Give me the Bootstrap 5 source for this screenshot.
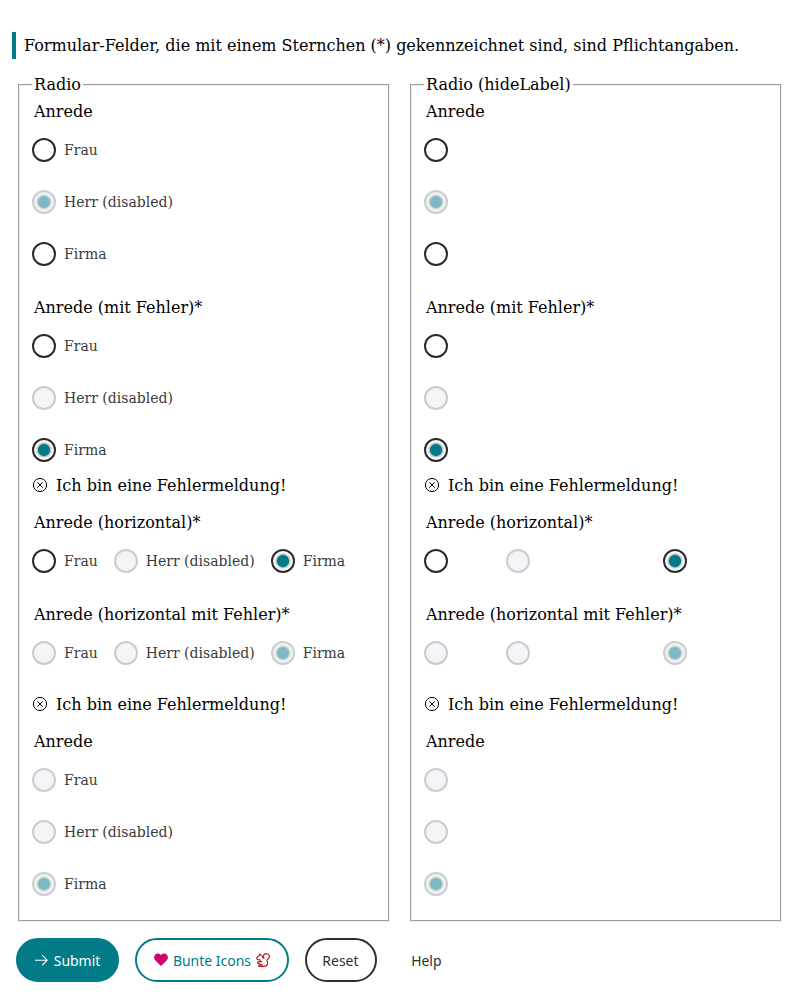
<!DOCTYPE html>
<html lang="de">
<head>
<meta charset="utf-8">
<meta name="viewport" content="width=device-width, initial-scale=1">
<title>Radio</title>
<link href="https://cdn.jsdelivr.net/npm/bootstrap@5.3.0/dist/css/bootstrap.min.css" rel="stylesheet">
<style>
body{font-family:"DejaVu Serif",serif;font-size:16px;color:#000;line-height:19px;background:#fff}
.hint{margin:32px 0 16px 12px;border-left:4px solid #007b87;padding-left:8px;height:27px;line-height:27px}
.page-grid{--bs-gutter-x:20px;margin-left:8px;margin-right:8px}
.frame{border:2px groove #f0f0f0;padding:4px 12px 9px;height:847px}
.frame>legend{float:none;width:auto;font-size:16px;line-height:19px;margin:0;padding:0 2px}
.group-label{float:none;font-size:16px;line-height:28px;height:26px;margin:0;padding:0 2px}
.group{margin-bottom:14px}
.group.with-error{margin-bottom:0}
.choice{height:52px;font-size:14px;color:#2f2f31;gap:8px}
.choice .form-check-input{width:24px;height:24px;margin:0;border:2px solid #2b2b2d;background:#fff;flex:none;opacity:1}
.choice .form-check-input:checked{background:radial-gradient(circle,#007b87 0 5.5px,#a9b4b6 6.4px,#dededf 7.2px,#fff 9px)}
.choice .form-check-input:disabled{border-color:#ccc;background:#f3f4f8;opacity:1}
.choice .form-check-input:disabled:checked{background:radial-gradient(circle,#7fbac2 0 5.5px,#c9d0d5 6.4px,#e4e5e9 7.2px,#f3f4f8 9px)}
.choice .form-check-label,.choice .form-check-input:disabled~.form-check-label{color:#3a3a3c;opacity:1}
.error{height:18px;gap:8px;margin-bottom:15px}
.error span{line-height:18px;padding-top:2px}
.error.low{margin-top:16px}
.error svg{width:16px;height:16px}
.actions{margin:16px 0 0 16px;gap:16px}
.pill{height:44px;border-radius:22px;border:2px solid;padding:0 8px 1px;font-family:"Noto Sans",sans-serif;font-size:15px;line-height:20px;display:inline-flex;align-items:center;justify-content:center;gap:4px;white-space:nowrap}
.pill span{transform:scaleX(.93)}
.pill svg{width:14px;height:14px;flex:none}
.pill-submit{width:103px;background:#007b87;border-color:#007b87;color:#fff;padding-left:9px}
.pill-icons{width:154px;color:#007b87;border-color:#007b87;gap:2px}
.pill-reset{width:72px;color:#2f2f31;padding-right:9px}
.pill-help{width:67px;color:#2f2f31;border-color:transparent}
</style>
</head>
<body>
<p class="hint">Formular-Felder, die mit einem Sternchen (*) gekennzeichnet sind, sind Pflichtangaben.</p>
<form>
<div class="row page-grid" id="columns"></div>
<div class="actions d-flex">
<button type="button" class="btn pill pill-submit"><svg viewBox="0 0 14 14" fill="none" stroke="#fff" stroke-width="1.1"><path d="M1 7.2H13M8.2 2.2L13.2 7.2L8.2 12.2"/></svg><span>Submit</span></button>
<button type="button" class="btn pill pill-icons"><svg viewBox="0 0 14 14" fill="#cf0070"><path d="M7 13L1.2 7.3C-.5 5.4-.1 2.9 1.4 1.5C3.2.1 5.7.3 7 2.3C8.3.3 10.8.1 12.6 1.5C14.1 2.9 14.5 5.4 12.8 7.3Z"/></svg><span>Bunte Icons</span><svg viewBox="0 0 14 14" fill="none" stroke="#c0181c" stroke-width="1.15" stroke-linejoin="round" stroke-linecap="round"><path d="M3.4 2.4L3.8 1L5 2.2C6.3 2.6 6.8 3.6 6.7 4.7L7.8 5.2C8.2 4.3 7.3 3.6 7.6 2.3C8 .9 9.6.4 11 .8C12.8 1.2 13.7 2.8 13.3 4.3C12.9 5.9 11.3 6 11 7.1C10.8 8.2 12 9 11.6 10.8C11.2 12.6 9.9 13.3 8.2 13.3H2.8C2.2 12.3 3 11.7 4.6 11.8L3.2 10.4L1.6 10.1L1.7 8.8L4.2 8.6L4 6.8L2.4 6.7C1.2 6.5.5 5.8.8 4.8C1.5 4.1 2 2.8 3.4 2.4ZM4.6 11.8H6.4M4.2 8.6H5.8"/></svg></button>
<button type="reset" class="btn pill pill-reset"><span>Reset</span></button>
<button type="button" class="btn pill pill-help"><span>Help</span></button>
</div>
</form>
<script>
const groups = [
  {label: 'Anrede', checked: 1, disabled: [1]},
  {label: 'Anrede (mit Fehler)*', checked: 2, disabled: [1], error: true},
  {label: 'Anrede (horizontal)*', checked: 2, disabled: [1], horizontal: true},
  {label: 'Anrede (horizontal mit Fehler)*', checked: 2, disabled: [0, 1, 2], horizontal: true, error: true},
  {label: 'Anrede', checked: 2, disabled: [0, 1, 2]}
];
const names = ['Frau', 'Herr (disabled)', 'Firma'];
const errorIcon = '<svg viewBox="0 0 16 16" fill="none" stroke="#000" stroke-width="1"><circle cx="8" cy="8" r="6.6"/><path d="M5.2 5.2L10.8 10.8M10.8 5.2L5.2 10.8"/></svg>';
function fieldset(title, hidden, key) {
  const body = groups.map((g, i) => {
    const items = names.map((n, j) => {
      const id = `${key}-${i}-${j}`;
      return `<div class="choice d-flex align-items-center"><input class="form-check-input" type="radio" id="${id}" name="${key}-${i}"${g.checked === j ? ' checked' : ''}${g.disabled.includes(j) ? ' disabled' : ''}><label class="form-check-label${hidden ? ' invisible' : ''}" for="${id}">${n}</label></div>`;
    }).join('');
    const error = g.error ? `<div class="error d-flex align-items-center${g.horizontal ? ' low' : ''}">${errorIcon}<span>Ich bin eine Fehlermeldung!</span></div>` : '';
    return `<fieldset class="group${g.error ? ' with-error' : ''}"><legend class="group-label">${g.label}</legend><div class="d-flex ${g.horizontal ? 'gap-3' : 'flex-column'}">${items}</div>${error}</fieldset>`;
  }).join('');
  return `<div class="col-6"><fieldset class="frame"><legend>${title}</legend>${body}</fieldset></div>`;
}
document.getElementById('columns').innerHTML = fieldset('Radio', false, 'a') + fieldset('Radio (hideLabel)', true, 'b');
</script>
<script src="https://cdn.jsdelivr.net/npm/bootstrap@5.3.0/dist/js/bootstrap.bundle.min.js"></script>
</body>
</html>
